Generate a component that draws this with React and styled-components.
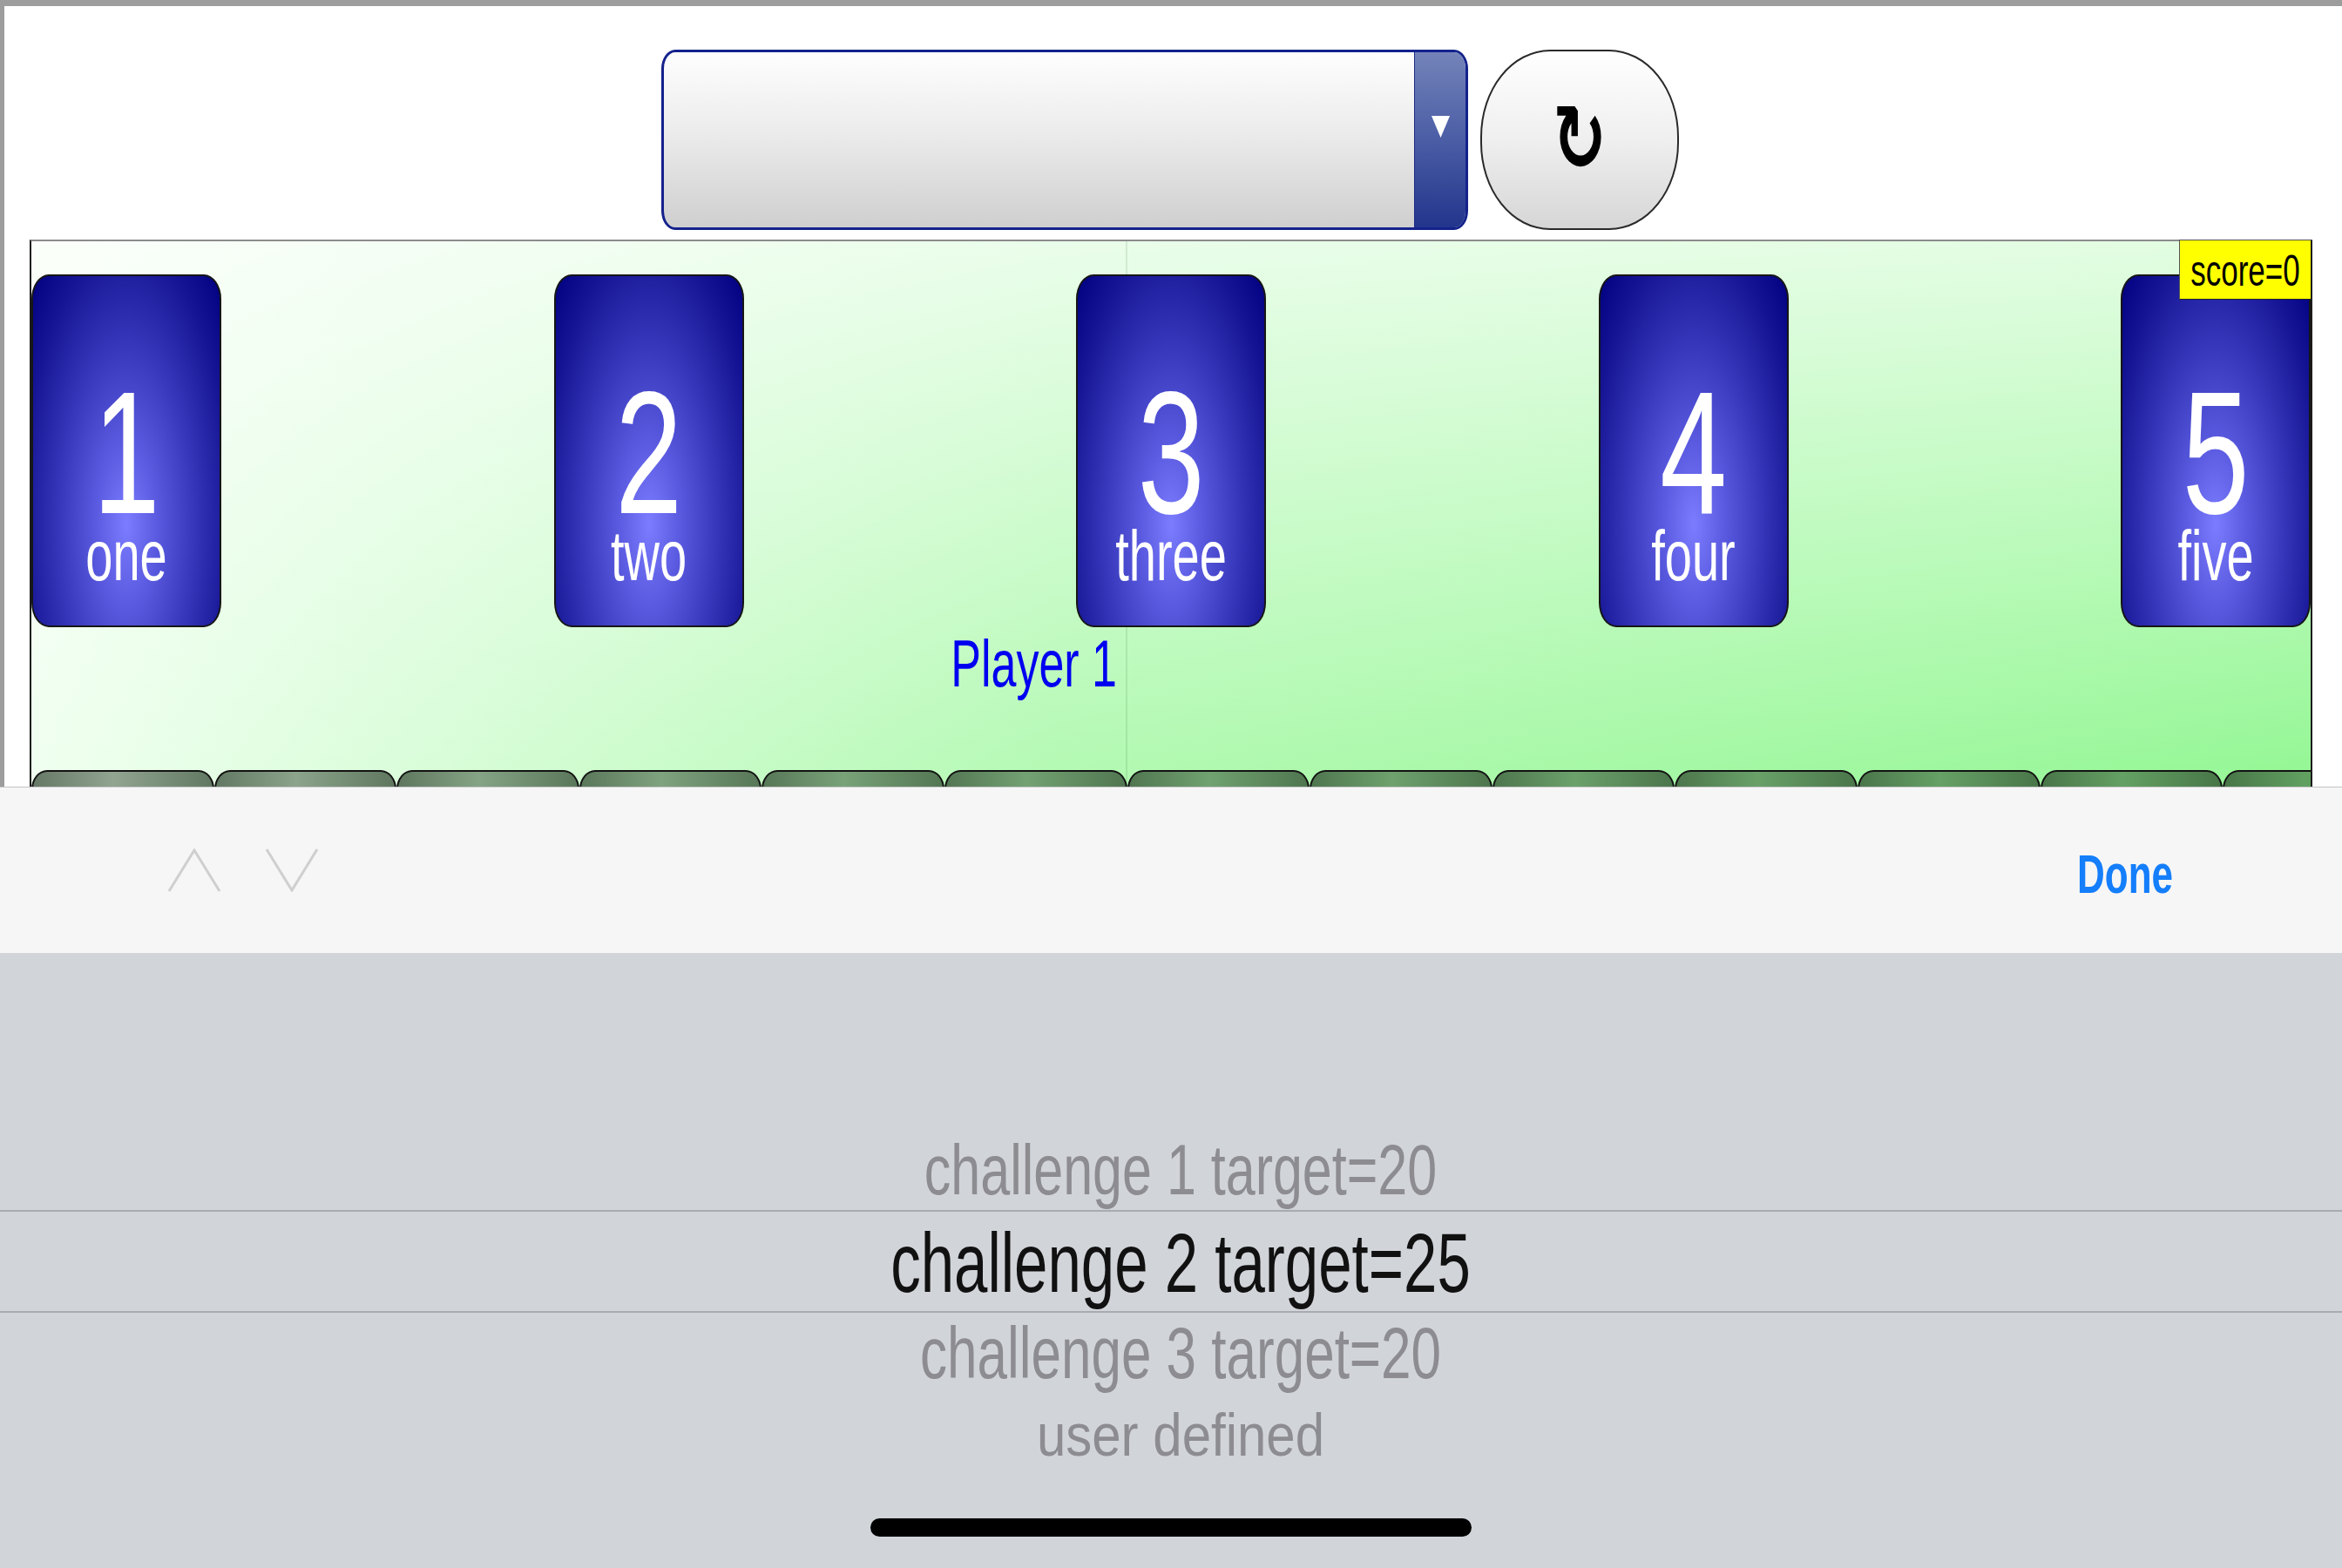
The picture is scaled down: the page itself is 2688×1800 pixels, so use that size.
import React from 'react'
import styled, { createGlobalStyle } from 'styled-components'

// the capture is stretched vertically (1242 -> 1800), so text is stretched too
const STRETCH = 1.45

const GlobalStyle = createGlobalStyle`
  html, body {
    margin: 0;
    padding: 0;
  }
  body {
    background: #9d9d9d;
    font-family: "Liberation Sans", Arial, sans-serif;
    overflow: hidden;
  }
`

const Screen = styled.div`
  width: 2688px;
  height: 1800px;
  display: flex;
  flex-direction: column;
  background: #9d9d9d;
  overflow: hidden;
`

const Page = styled.div`
  height: 896px;
  margin: 7px 0 0 5px;
  background: #fff;
  overflow: hidden;
`

const Toolbar = styled.div`
  display: flex;
  justify-content: center;
  gap: 14px;
  padding: 50px 7px 0 0;
`

const Select = styled.div`
  width: 926px;
  height: 207px;
  box-sizing: border-box;
  display: flex;
  border: 3px solid #14228c;
  border-radius: 16px / 22px;
  overflow: hidden;
  background: linear-gradient(#fefefe, #ececec 45%, #cfcfcf);
`

const SelectValue = styled.div`
  flex: 1;
`

const SelectArrow = styled.div`
  width: 59px;
  border-left: 1px solid #1b2b84;
  background: linear-gradient(#7383b9, #4b5da5 50%, #22358c);
  display: flex;
  justify-content: center;
  align-items: flex-start;
  padding-top: 73px;
  box-sizing: border-box;
`

const RefreshButton = styled.button`
  width: 228px;
  height: 207px;
  box-sizing: border-box;
  border: 2px solid #2a2a2a;
  border-radius: 80px / 100px;
  background: linear-gradient(#ffffff, #efefef 50%, #d6d6d6);
  display: flex;
  align-items: center;
  justify-content: center;
  padding: 0 0 6px;
`

const RefreshGlyph = styled.span`
  display: inline-block;
  font-family: "DejaVu Sans", sans-serif;
  font-size: 74px;
  font-weight: bold;
  line-height: 1;
  color: #000;
  transform: scaleY(${STRETCH});
`

const Board = styled.div`
  position: relative;
  width: 2620px;
  height: 660px;
  box-sizing: border-box;
  margin: 11px 0 0 29px;
  border: 2px solid #1c1c1c;
  border-top-color: #8c8c8c;
  display: flex;
  flex-direction: column;
  background:
    linear-gradient(90deg, transparent 1256px, rgba(0, 70, 0, 0.1) 1256px, rgba(0, 70, 0, 0.1) 1258px, transparent 1258px),
    linear-gradient(to bottom, rgba(255, 255, 255, 0.72), rgba(255, 255, 255, 0) 92%),
    linear-gradient(to right, #f0fff0, #b4f9b4 45%, #96f796);
`

const CardRow = styled.div`
  display: flex;
  justify-content: space-between;
  padding-top: 38px;
`

const Card = styled.div`
  width: 218px;
  height: 405px;
  box-sizing: border-box;
  border: 2px solid #161616;
  border-radius: 20px / 28px;
  background: radial-gradient(ellipse farthest-corner at 50% 71%, #7c7cff 0%, #5c5ce2 22%, #3838bc 50%, #1414 94 80%, #000080 100%);
  background: radial-gradient(ellipse farthest-corner at 50% 71%, #7c7cff 0%, #5c5ce2 22%, #3838bc 50%, #141494 80%, #000080 100%);
  display: flex;
  flex-direction: column;
  align-items: center;
  padding-top: 152px;
  color: #fff;
`

const CardDigit = styled.div`
  font-size: 138px;
  line-height: 100px;
  transform: scaleY(${STRETCH});
`

const CardWord = styled.div`
  margin-top: 49px;
  font-size: 56px;
  line-height: 40px;
  transform: scaleY(${STRETCH});
`

const PlayerRow = styled.div`
  display: grid;
  grid-template-columns: 1256px 1fr;
  margin-top: 12px;
`

const PlayerName = styled.div`
  text-align: right;
  padding-right: 10px;
  font-size: 52px;
  line-height: 60px;
  color: #0000f0;
  transform: scaleY(${STRETCH});
`

const TabRow = styled.div`
  display: flex;
  margin-top: 92px;
  overflow: hidden;
`

const Tab = styled.div`
  flex: 0 0 209.6px;
  height: 60px;
  box-sizing: border-box;
  border: 2px solid #121212;
  border-bottom: none;
  border-radius: 18px 18px 0 0 / 22px 22px 0 0;
  background: linear-gradient(90deg, rgba(30, 50, 30, 0.66), rgba(30, 50, 30, 0.44) 45%, rgba(30, 50, 30, 0.66));
`

const ScoreBadge = styled.div`
  position: absolute;
  top: -2px;
  right: -1px;
  z-index: 2;
  width: 152px;
  height: 69px;
  box-sizing: border-box;
  border: 1px solid #555;
  border-right-color: #222;
  border-bottom-color: #222;
  background: #ffff00;
  display: flex;
  align-items: center;
  justify-content: center;
`

const ScoreText = styled.span`
  display: inline-block;
  font-size: 35px;
  line-height: 1;
  color: #000;
  transform: scaleY(${STRETCH});
`

const AccessoryBar = styled.div`
  height: 190px;
  border-top: 1px solid #c4c4c6;
  background: #f6f6f6;
  display: flex;
  align-items: center;
  justify-content: space-between;
  padding: 0 194px 0 192px;
`

const Chevrons = styled.div`
  display: flex;
  gap: 50px;
`

const DoneButton = styled.span`
  display: inline-block;
  margin-top: 8px;
  font-size: 44px;
  font-weight: 700;
  line-height: 1;
  color: #147efb;
  transform: scaleY(${STRETCH});
`

const Picker = styled.div`
  flex: 1;
  background: #d1d4d9;
  display: flex;
  flex-direction: column;
  padding-top: 219px;
`

const PickerRow = styled.div`
  padding-left: 22px;
  text-align: center;
  margin-top: ${p => p.$gap || 0}px;
  font-size: ${p => p.$size}px;
  line-height: ${p => p.$size}px;
  color: ${p => (p.$active ? '#111' : '#8c8c91')};
  transform: scaleY(${p => p.$scale});
`

const SelectionBand = styled.div`
  margin-top: 15px;
  padding: 24px 0 21px;
  border-top: 2px solid #a8abb0;
  border-bottom: 2px solid #a8abb0;
`

const HomeIndicator = styled.div`
  width: 690px;
  height: 21px;
  margin: auto auto 36px;
  border-radius: 11px;
  background: #000;
`

const cards = [
  [1, 'one'],
  [2, 'two'],
  [3, 'three'],
  [4, 'four'],
  [5, 'five'],
]

const Chevron = ({ up }) => (
  <svg width="62" height="50" viewBox="0 0 62 50">
    <polyline
      points={up ? '2,49 31,2 60,49' : '2,1 31,48 60,1'}
      fill="none"
      stroke="#cfcfcf"
      strokeWidth="3"
    />
  </svg>
)

const App = () => {
  return (
    <Screen>
      <GlobalStyle />
      <Page>
        <Toolbar>
          <Select>
            <SelectValue />
            <SelectArrow>
              <svg width="21" height="25" viewBox="0 0 21 25">
                <polygon points="0,0 21,0 10.5,25" fill="#fff" />
              </svg>
            </SelectArrow>
          </Select>
          <RefreshButton>
            <RefreshGlyph>↻</RefreshGlyph>
          </RefreshButton>
        </Toolbar>
        <Board>
          <CardRow>
            {cards.map(([n, word]) => (
              <Card key={n}>
                <CardDigit>{n}</CardDigit>
                <CardWord>{word}</CardWord>
              </Card>
            ))}
          </CardRow>
          <PlayerRow>
            <PlayerName>Player 1</PlayerName>
          </PlayerRow>
          <TabRow>
            {Array.from({ length: 13 }).map((_, i) => (
              <Tab key={i} />
            ))}
          </TabRow>
          <ScoreBadge>
            <ScoreText>score=0</ScoreText>
          </ScoreBadge>
        </Board>
      </Page>
      <AccessoryBar>
        <Chevrons>
          <Chevron up />
          <Chevron />
        </Chevrons>
        <DoneButton>Done</DoneButton>
      </AccessoryBar>
      <Picker>
        <PickerRow $size={61} $scale={1.34}>challenge 1 target=20</PickerRow>
        <SelectionBand>
          <PickerRow $size={69} $scale={1.41} $active>challenge 2 target=25</PickerRow>
        </SelectionBand>
        <PickerRow $size={62} $scale={1.35} $gap={16}>challenge 3 target=20</PickerRow>
        <PickerRow $size={60} $scale={1.13} $gap={33}>user defined</PickerRow>
        <HomeIndicator />
      </Picker>
    </Screen>
  )
}

export default App
